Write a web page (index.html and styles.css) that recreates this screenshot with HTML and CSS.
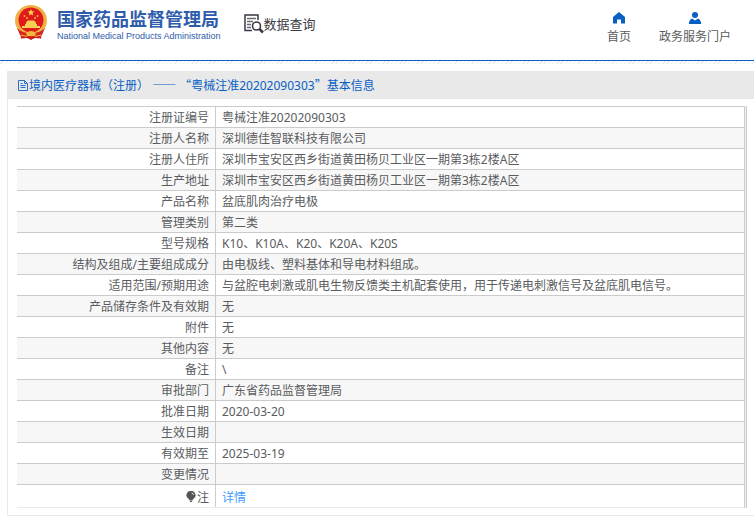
FILE: index.html
```html
<!DOCTYPE html>
<html lang="zh-CN">
<head>
<meta charset="utf-8">
<title>数据查询</title>
<link rel="stylesheet" href="styles.css">
</head>
<body>
<header class="header">
  <a class="brand" href="#">
    <svg class="emblem" viewBox="0 0 32 36" aria-hidden="true">
      <path d="M5 24H27L26 34Q21 31 16 35Q11 31 6 34Z" fill="#d8231f"/>
      <ellipse cx="16" cy="15.500" rx="16" ry="15.500" fill="#efb144"/>
      <ellipse cx="16" cy="15" rx="12.500" ry="12.500" fill="#e01a1a"/>
      <path d="M16 4l1 2.300 2.500.2-1.900 1.600.6 2.400-2.200-1.300-2.200 1.300.6-2.400-1.900-1.600 2.500-.2z" fill="#f8d34c"/>
      <g fill="#f3b840"><circle cx="9.500" cy="11" r="1"/><circle cx="12" cy="13" r="1"/><circle cx="20" cy="13" r="1"/><circle cx="22.500" cy="11" r="1"/></g>
      <path d="M11 17.500L13 15.500H19L21 17.500V19H22V21H25V23H7V21H10V19H11Z" fill="#f8cf55"/>
      <path d="M2 23C6 27 10 28 16 28C22 28 26 27 30 23L27 30C22 33 10 33 5 30Z" fill="#d8231f"/>
      <path d="M11 28Q16 24 21 28L20 31H12Z" fill="#f2b83e"/>
      <path d="M6 30L12 31.500M20 31.500L26 30" stroke="#f2b83e" fill="none"/>
      <path d="M8 33Q12 31 16 34Q20 31 24 33" stroke="#c41512" fill="none"/>
    </svg>
    <span class="brand-text">
      <span class="brand-cn">国家药品监督管理局</span>
      <span class="brand-en">National Medical Products Administration</span>
    </span>
  </a>
  <a class="query" href="#">
    <svg class="query-icon" viewBox="0 0 20 20" aria-hidden="true">
      <path d="M8 16.500H1V1H14V6" fill="none" stroke="#3b3745" stroke-width="1.500"/>
      <path d="M3 4.500H12M3 7.500H9M3 10.500H7M3 13.500H7" stroke="#6b6875" stroke-width="1.300"/>
      <circle cx="12.500" cy="12" r="4" fill="#fff" stroke="#3b3745" stroke-width="1.600"/>
      <path d="M15.500 15L19 18.500" stroke="#3b3745" stroke-width="2.500"/>
    </svg>
    <span>数据查询</span>
  </a>
  <nav class="nav">
    <a href="#">
      <svg viewBox="0 0 12 12" aria-hidden="true"><path d="M6 0L12 5V11.500H8V7.500H4V11.500H0V5Z" fill="#0a5fc4"/></svg>
      <span>首页</span>
    </a>
    <a href="#">
      <svg viewBox="0 0 12 12" aria-hidden="true"><circle cx="6" cy="3" r="3" fill="#0a5fc4"/><path d="M0 12V10Q1 7 3 6.500L6 8.500L9 6.500Q11 7 12 10V12Z" fill="#0a5fc4"/></svg>
      <span>政务服务门户</span>
    </a>
  </nav>
</header>
<div class="hatch"></div>
<main class="panel">
  <h1 class="title">
    <svg viewBox="0 0 12 12" aria-hidden="true"><path d="M1.500 .5H7.500L10.500 3.500V10.500H1.500ZM7.500 .5V3.500H10.500M3.500 5.500H8.500M3.500 7.500H8.500M3.500 3.500H5.500" fill="none" stroke="#2a6fc9"/></svg>
    <span>境内医疗器械（注册） <span class="dash">——</span><span class="quote">“</span>粤械注准20202090303<span class="quote">”</span>基本信息</span>
  </h1>
  <div class="frame">
    <table class="info">
      <tbody>
        <tr><th scope="row">注册证编号</th><td>粤械注准20202090303</td></tr>
        <tr><th scope="row">注册人名称</th><td>深圳德佳智联科技有限公司</td></tr>
        <tr><th scope="row">注册人住所</th><td>深圳市宝安区西乡街道黄田杨贝工业区一期第3栋2楼A区</td></tr>
        <tr><th scope="row">生产地址</th><td>深圳市宝安区西乡街道黄田杨贝工业区一期第3栋2楼A区</td></tr>
        <tr><th scope="row">产品名称</th><td>盆底肌肉治疗电极</td></tr>
        <tr><th scope="row">管理类别</th><td>第二类</td></tr>
        <tr><th scope="row">型号规格</th><td>K10、K10A、K20、K20A、K20S</td></tr>
        <tr><th scope="row">结构及组成/主要组成成分</th><td>由电极线、塑料基体和导电材料组成。</td></tr>
        <tr><th scope="row">适用范围/预期用途</th><td>与盆腔电刺激或肌电生物反馈类主机配套使用，用于传递电刺激信号及盆底肌电信号。</td></tr>
        <tr><th scope="row">产品储存条件及有效期</th><td>无</td></tr>
        <tr><th scope="row">附件</th><td>无</td></tr>
        <tr><th scope="row">其他内容</th><td>无</td></tr>
        <tr><th scope="row">备注</th><td>\</td></tr>
        <tr><th scope="row">审批部门</th><td>广东省药品监督管理局</td></tr>
        <tr><th scope="row">批准日期</th><td>2020-03-20</td></tr>
        <tr><th scope="row">生效日期</th><td></td></tr>
        <tr><th scope="row">有效期至</th><td>2025-03-19</td></tr>
        <tr><th scope="row">变更情况</th><td></td></tr>
        <tr class="note"><th scope="row"><svg viewBox="0 0 10 12" aria-hidden="true"><path d="M5 0A4.200 4.200 0 0 1 7.500 7.800L6.500 9H3.500L2.500 7.800A4.200 4.200 0 0 1 5 0ZM3.500 9.500H6.500L6 11H4Z" fill="#555"/><path d="M5.500 2Q7.500 2.200 7.500 4" fill="none" stroke="#fff" stroke-width=".8"/></svg>注</th><td><a href="#">详情</a></td></tr>
      </tbody>
    </table>
  </div>
</main>
</body>
</html>
```
FILE: styles.css
```css
* {
  box-sizing: border-box;
}

body {
  margin: 0;
  background: #fff;
  color: #5a5c60;
  font: 12px/20px "Noto Sans", "Noto Sans CJK SC", sans-serif;
}

a {
  color: inherit;
  text-decoration: none;
}

svg {
  display: block;
  flex: none;
}

.header {
  display: flex;
  align-items: flex-start;
  height: 61px;
  padding: 0 23px 0 15px;
  border-bottom: 1px solid #0a5fc4;
}

.brand {
  display: flex;
  gap: 10px;
  padding-top: 5px;
  color: #2e5cab;
}

.emblem {
  width: 32px;
  height: 36px;
}

.brand-text {
  display: flex;
  flex-direction: column;
  padding-top: 2px;
}

.brand-cn {
  font: bold 18px/22px "Noto Sans CJK SC", sans-serif;
}

.brand-en {
  font: 9px/14px "Liberation Sans", sans-serif;
  white-space: nowrap;
}

.query {
  display: flex;
  align-items: center;
  margin-left: 23px;
  padding-top: 14px;
  color: #3c3c44;
  font-size: 13px;
}

.query-icon {
  width: 20px;
  height: 20px;
}

.nav {
  display: flex;
  gap: 28px;
  margin-left: auto;
  padding-top: 12px;
}

.nav a {
  display: flex;
  flex-direction: column;
  align-items: center;
  gap: 3px;
}

.nav svg {
  width: 12px;
  height: 12px;
}

.hatch {
  height: 3px;
  background: repeating-linear-gradient(135deg, #fff 0 2px, #ececec 2px 3px);
}

.panel {
  margin: 7px 0 0 7px;
  border: solid #e9e9ec;
  border-width: 0 0 1px 1px;
}

.title {
  display: flex;
  align-items: center;
  height: 28px;
  margin: 0 0 7px;
  padding: 2px 0 0 9px;
  border-bottom: 1px solid #e4e5ee;
  background: #e9e9e9;
  color: #0a5fc4;
  font-size: 12px;
  font-weight: normal;
}

.title svg {
  width: 12px;
  height: 12px;
}

.title > span {
  flex: 1;
}

.dash,
.quote {
  font-family: "Noto Sans CJK SC", sans-serif;
}

.dash {
  margin-right: 3px;
}

.frame {
  margin: 0 7px 7px 9px;
  padding-right: 1px;
  border-right: 1px solid #cbcbcf;
  background: #f0f0f4;
}

.info {
  width: 100%;
  table-layout: fixed;
  border-collapse: separate;
  border-spacing: 0;
  border-right: 1px solid #cbcbcb;
  border-bottom: 1px solid #ebebee;
  background: #fff;
}

.info th,
.info td {
  height: 21px;
  padding: 2px 6px 0;
  border-top: 1px solid #cbcbcb;
  line-height: 18px;
  font-weight: normal;
  text-align: left;
}

.info th {
  width: 199px;
  border-right: 1px solid #cbcbcb;
  text-align: right;
}

.info tr:nth-child(even) {
  background: #f7f7f7;
}

.info .note th,
.info .note td {
  height: 23px;
  padding-top: 4px;
}

.note svg {
  display: inline-block;
  width: 10px;
  height: 12px;
  margin-right: 1px;
  vertical-align: -1px;
}

.note a {
  color: #409eff;
}
```
